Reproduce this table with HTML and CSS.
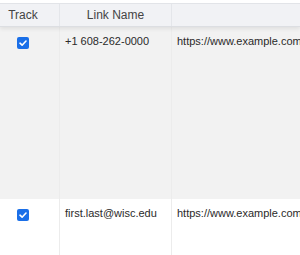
FILE: index.html
```html
<!DOCTYPE html>
<html>
<head>
<meta charset="utf-8">
<link rel="stylesheet" href="styles.css">
</head>
<body>
<div class="table">
  <div class="head">
    <div class="cell c1 hcell">Track</div>
    <div class="cell c2 hcell">Link Name</div>
    <div class="cell c3 hcell"></div>
  </div>
  <div class="row row-alt">
    <div class="cell c1"><span class="check"><svg viewBox="0 0 12 12" width="12" height="12"><rect x="0" y="0" width="12" height="12" rx="2" fill="#1a6fe8"/><path d="M3 6.2 L5.1 8.2 L9 4" fill="none" stroke="#fff" stroke-width="1.6" stroke-linecap="round" stroke-linejoin="round"/></svg></span></div>
    <div class="cell c2">+1 608-262-0000</div>
    <div class="cell c3">https://www.example.com</div>
  </div>
  <div class="row">
    <div class="cell c1"><span class="check"><svg viewBox="0 0 12 12" width="12" height="12"><rect x="0" y="0" width="12" height="12" rx="2" fill="#1a6fe8"/><path d="M3 6.2 L5.1 8.2 L9 4" fill="none" stroke="#fff" stroke-width="1.6" stroke-linecap="round" stroke-linejoin="round"/></svg></span></div>
    <div class="cell c2">first.last@wisc.edu</div>
    <div class="cell c3">https://www.example.com</div>
  </div>
</div>
</body>
</html>
```
FILE: styles.css
```css
html, body {
  margin: 0;
  padding: 0;
  background: #fff;
  overflow: hidden;
}
body {
  font-family: "Liberation Sans", Arial, sans-serif;
  color: #333;
  padding-top: 3px;
}
.table {
  width: 100%;
  overflow: hidden;
}
.head {
  display: grid;
  grid-template-columns: 60px 112px 1fr;
  height: 22px;
  background: #f1f2f5;
  border-top: 1px solid #e2e4e8;
  border-bottom: 1px solid #dcdee2;
  box-shadow: 0 2px 4px rgba(0,0,0,0.08);
  position: relative;
  z-index: 1;
}
.hcell {
  font-size: 12px;
  color: #444;
  text-align: center;
  line-height: 22px;
}
.head .c1 {
  padding-right: 13px;
}
.head .c1, .head .c2 {
  border-right: 1px solid #e4e6ea;
}
.row {
  display: grid;
  grid-template-columns: 60px 112px 1fr;
  background: #fff;
}
.row-alt {
  background: #f2f2f2;
  height: 172px;
}
.row:not(.row-alt) {
  height: 60px;
}
.row .c1, .row .c2 {
  border-right: 1px solid #ececec;
}
.row .cell {
  font-size: 11px;
  color: #2a2a2a;
  padding-top: 8px;
  padding-left: 5px;
  white-space: nowrap;
  overflow: hidden;
}
.row .c1 {
  padding-left: 0;
  padding-right: 13px;
  display: flex;
  justify-content: center;
  padding-top: 10px;
}
.check {
  display: block;
  width: 12px;
  height: 12px;
}
.check svg {
  display: block;
}
```
